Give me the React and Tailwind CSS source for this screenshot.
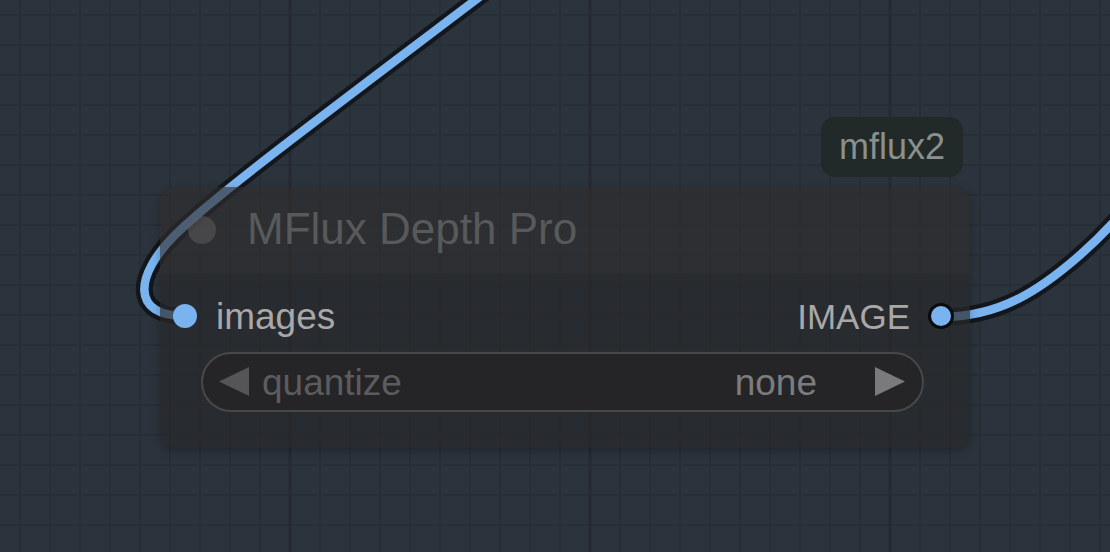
import React from "react";

const W = 1110;
const H = 552;

const COLS = Array.from({ length: 37 }, (_, i) => 20 + 30 * i);
const ROWS = Array.from({ length: 19 }, (_, i) => 15 + 30 * i);

const LINKS = [
  "M185 316 C130 316 135 275 175 235 S328 112 515 -30",
  "M941 317 C1000 317 1040 290 1080 255 S1150 180 1180 140",
];

function Canvas() {
  return (
    <svg
      className="absolute inset-0"
      width={W}
      height={H}
      viewBox={`0 0 ${W} ${H}`}
    >
      <rect width={W} height={H} fill="#2b333c" />
      {ROWS.map((y) => (
        <line key={"r" + y} x1="0" x2={W} y1={y} y2={y} stroke="#262e36" strokeWidth="2" />
      ))}
      {COLS.map((x) => (
        <line
          key={"c" + x}
          x1={x}
          x2={x}
          y1="0"
          y2={H}
          stroke={(x - 290) % 300 === 0 ? "#242b32" : "#262e36"}
          strokeWidth={(x - 290) % 300 === 0 ? 3 : 2}
        />
      ))}
      {LINKS.map((d, i) => (
        <g key={i} fill="none" strokeLinecap="round">
          <path d={d} stroke="#13171c" strokeWidth="17" />
          <path d={d} stroke="#7ab4f0" strokeWidth="8.5" />
        </g>
      ))}
    </svg>
  );
}

function Arrow({ dir, color }) {
  return (
    <svg width="30" height="30" viewBox="0 0 30 30" className="shrink-0">
      {dir === "left" ? (
        <polygon points="30,0 30,29 0,14.5" fill={color} />
      ) : (
        <polygon points="0,0 0,29 30,14.5" fill={color} />
      )}
    </svg>
  );
}

function Node() {
  return (
    <div className="absolute left-[160px] top-[187px] w-[810px] h-[261px] rounded-[14px] overflow-hidden flex flex-col shadow-[0_3px_10px_rgba(0,0,0,0.25)]">
      <div className="h-[87px] shrink-0 flex items-center pl-[28px] bg-[rgba(48,46,46,0.64)] border-b border-[rgba(44,44,46,0.8)]">
        <div className="w-[28px] h-[28px] rounded-full bg-[rgba(96,96,98,0.5)]" />
        <span className="ml-[31px] text-[44px] leading-none text-[#58595b] mt-[-2px]">
          MFlux Depth Pro
        </span>
      </div>
      <div className="flex-1 flex flex-col bg-[rgba(40,40,41,0.68)] pt-[12px]">
        <div className="h-[60px] flex items-center justify-between pl-[13px] pr-[16px]">
          <div className="flex items-center">
            <div className="w-[24px] h-[24px] rounded-full bg-[#7ab4f0]" />
            <span className="ml-[19px] text-[37px] leading-none text-[#a8a8a8]">images</span>
          </div>
          <div className="flex items-center">
            <span className="mr-[18px] text-[35px] leading-none text-[#a8a8a8]">IMAGE</span>
            <div className="w-[26px] h-[26px] rounded-full bg-[#7ab4f0] border-[3px] border-[#0b0b0c]" />
          </div>
        </div>
        <div className="mt-[6px] ml-[41px] mr-[46px] h-[60px] rounded-full border-2 border-[#48484a] bg-[rgba(36,36,38,0.85)] flex items-center pl-[16px] pr-[17px]">
          <Arrow dir="left" color="#555557" />
          <span className="ml-[13px] text-[37px] leading-none text-[#5c5c5e]">quantize</span>
          <span className="ml-auto text-[37px] leading-none text-[#7c7c7e]">none</span>
          <div className="ml-[58px]">
            <Arrow dir="right" color="#7a7a7c" />
          </div>
        </div>
      </div>
    </div>
  );
}

export default function App() {
  return (
    <div
      className="relative w-[1110px] h-[552px] overflow-hidden bg-[#2b333c]"
      style={{ fontFamily: '"Liberation Sans", Arial, sans-serif' }}
    >
      <Canvas />
      <div className="absolute left-[821px] top-[117px] w-[142px] h-[60px] rounded-[14px] bg-[#212a28] flex items-center justify-center">
        <span className="text-[36px] leading-none text-[#8a908d]">mflux2</span>
      </div>
      <Node />
    </div>
  );
}
